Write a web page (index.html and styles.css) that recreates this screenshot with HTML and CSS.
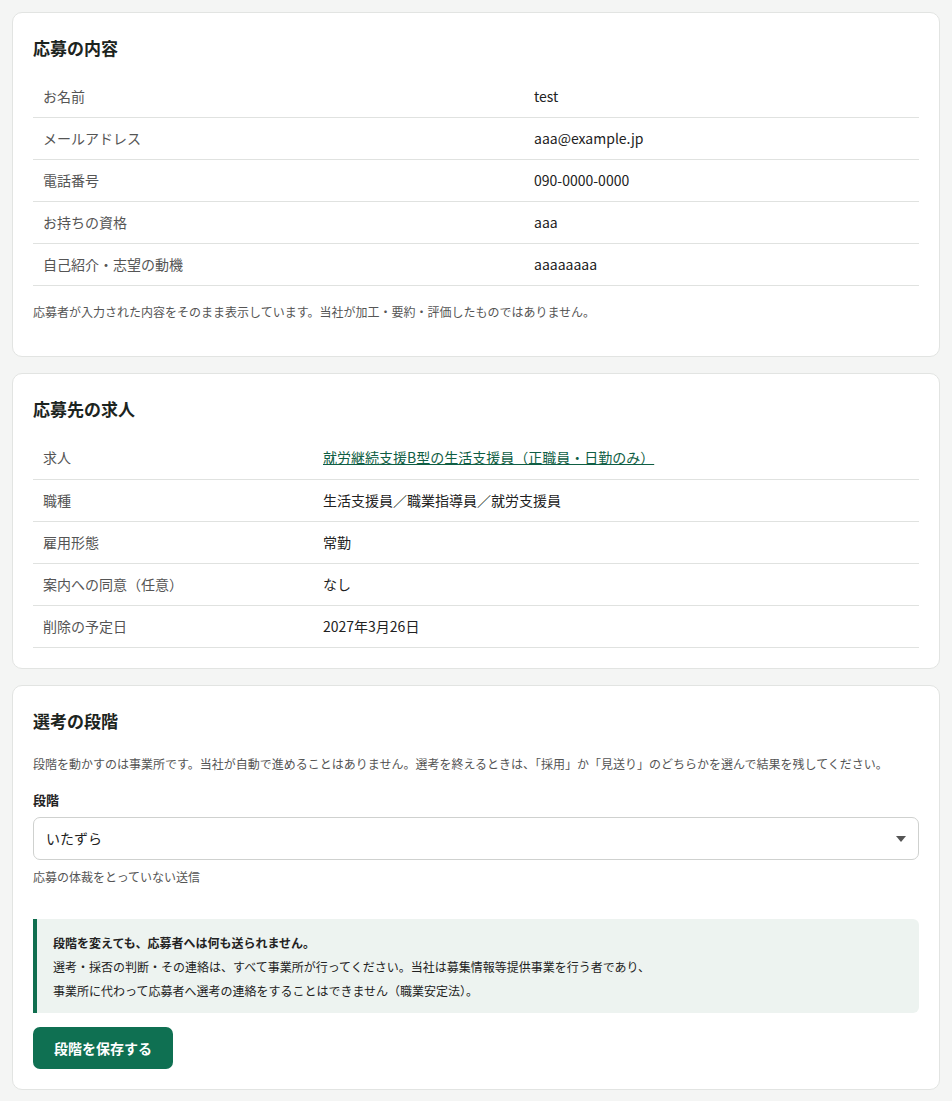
FILE: index.html
```html
<!DOCTYPE html>
<html lang="ja">
  <head>
    <meta charset="UTF-8" />
    <meta name="viewport" content="width=device-width, initial-scale=1.0" />
    <title>応募の詳細</title>
    <link rel="stylesheet" href="styles.css">
  </head>
  <body>
    <div class="page">
      <section class="card">
        <h2>応募の内容</h2>
        <table class="detail detail-entry">
          <tr><th>お名前</th><td>test</td></tr>
          <tr><th>メールアドレス</th><td>aaa@example.jp</td></tr>
          <tr><th>電話番号</th><td>090-0000-0000</td></tr>
          <tr><th>お持ちの資格</th><td>aaa</td></tr>
          <tr><th>自己紹介・志望の動機</th><td>aaaaaaaa</td></tr>
        </table>
        <p class="note">応募者が入力された内容をそのまま表示しています。当社が加工・要約・評価したものではありません。</p>
      </section>

      <section class="card">
        <h2>応募先の求人</h2>
        <table class="detail detail-job">
          <tr><th>求人</th><td><a href="#">就労継続支援B型の生活支援員（正職員・日勤のみ）</a></td></tr>
          <tr><th>職種</th><td>生活支援員／職業指導員／就労支援員</td></tr>
          <tr><th>雇用形態</th><td>常勤</td></tr>
          <tr><th>案内への同意（任意）</th><td>なし</td></tr>
          <tr><th>削除の予定日</th><td>2027年3月26日</td></tr>
        </table>
      </section>

      <section class="card">
        <h2>選考の段階</h2>
        <p class="desc">段階を動かすのは事業所です。当社が自動で進めることはありません。選考を終えるときは、「採用」か「見送り」のどちらかを選んで結果を残してください。</p>
        <form>
          <label for="stage">段階</label>
          <div class="select-wrap">
            <select id="stage" name="stage">
              <option>応募</option>
              <option>書類選考</option>
              <option>面接</option>
              <option>採用</option>
              <option>見送り</option>
              <option selected>いたずら</option>
            </select>
          </div>
          <p class="help">応募の体裁をとっていない送信</p>

          <div class="notice">
            <p class="notice-title">段階を変えても、応募者へは何も送られません。</p>
            <p>選考・採否の判断・その連絡は、すべて事業所が行ってください。当社は募集情報等提供事業を行う者であり、</p>
            <p>事業所に代わって応募者へ選考の連絡をすることはできません（職業安定法）。</p>
          </div>

          <button type="submit" class="btn">段階を保存する</button>
        </form>
      </section>
    </div>
  </body>
</html>
```

FILE: styles.css
```css
body {
  font-family: "Noto Sans CJK JP", "Noto Sans", sans-serif;
  margin: 0;
  background-color: #f4f5f4;
  color: #222;
}
.page {
  display: flex;
  flex-direction: column;
  gap: 16px;
  padding: 12px 12px 20px;
}
.card {
  background-color: #fff;
  border: 1px solid #e2e4e2;
  border-radius: 10px;
  padding: 23px 20px 20px;
}
h2 {
  margin: 0 0 16px;
  font-size: 17px;
  line-height: 24px;
  font-weight: 700;
  color: #1c2420;
}
.detail {
  width: 100%;
  border-collapse: collapse;
  font-size: 14px;
}
.detail th,
.detail td {
  text-align: left;
  padding: 11px 10px;
  line-height: 19.1px;
  border-bottom: 1px solid #e0e2e0;
}
.detail th {
  font-weight: 400;
  color: #555;
}
.detail-entry th {
  width: 471px;
}
.detail-job th {
  width: 260px;
}
.detail a {
  color: #0f5e44;
  text-decoration: underline;
}
.note {
  font-size: 12px;
  line-height: 18px;
  color: #555;
  margin: 17px 0 15px;
}
.desc {
  font-size: 12px;
  line-height: 18px;
  color: #555;
  margin: 22px 0 0;
}
label {
  display: block;
  font-size: 13px;
  font-weight: 700;
  line-height: 20px;
  margin: 17px 0 7px;
}
.select-wrap {
  position: relative;
}
.select-wrap::after {
  content: "";
  position: absolute;
  right: 13px;
  top: 19px;
  border-left: 5px solid transparent;
  border-right: 5px solid transparent;
  border-top: 6px solid #555;
  pointer-events: none;
}
select {
  width: 100%;
  height: 43px;
  padding: 0 12px;
  border: 1px solid #cfd1cf;
  border-radius: 7px;
  background-color: #fff;
  font-family: inherit;
  font-size: 14px;
  color: #222;
  -webkit-appearance: none;
  appearance: none;
}
.help {
  font-size: 12px;
  line-height: 18px;
  color: #555;
  margin: 8px 0 33px;
}
.notice {
  background-color: #edf3f0;
  border-left: 4px solid #0f6e4f;
  border-radius: 0 6px 6px 0;
  padding: 12px 16px 10px;
  font-size: 12px;
  line-height: 24px;
  color: #222;
}
.notice p {
  margin: 0;
}
.notice-title {
  font-weight: 700;
}
.btn {
  margin-top: 14px;
  background-color: #0f7052;
  color: #fff;
  border: none;
  border-radius: 7px;
  height: 42px;
  padding: 0 21px;
  font-family: inherit;
  font-size: 14px;
  font-weight: 700;
  cursor: pointer;
}
.btn:hover {
  background-color: #0b5a42;
}
```
